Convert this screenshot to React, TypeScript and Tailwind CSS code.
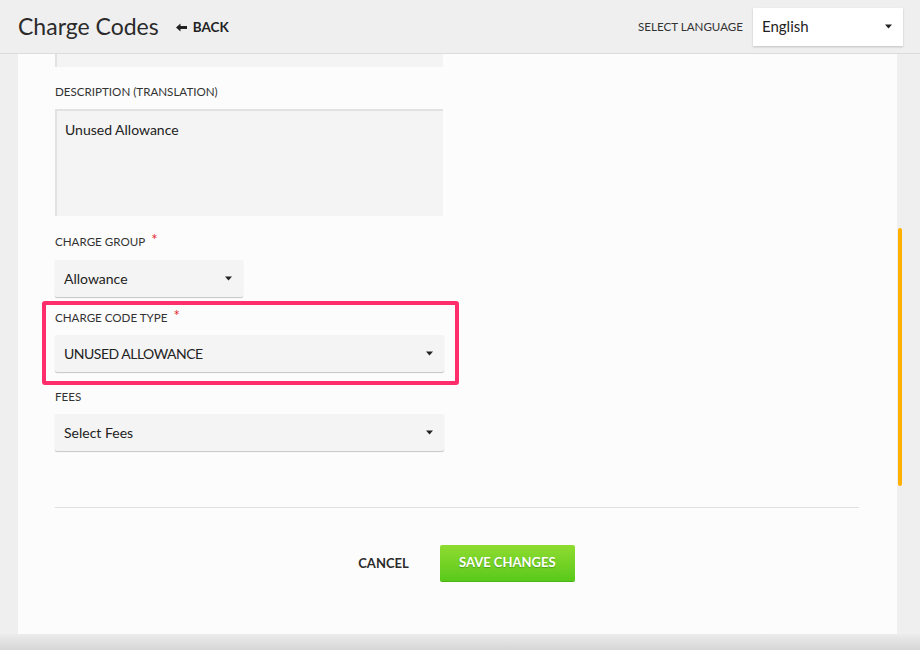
import React from 'react';

const font = { fontFamily: 'Lato, "Liberation Sans", sans-serif' };

function Caret() {
  return (
    <svg width="7" height="5" viewBox="0 0 7 5" className="shrink-0">
      <path d="M0 0.5h7L3.5 4.5z" fill="#222" />
    </svg>
  );
}

function Label({ text, required }: { text: string; required?: boolean }) {
  return (
    <div className="flex h-4 items-center text-[11.6px] uppercase leading-4 text-[#333]">
      <span>{text}</span>
      {required && <span className="ml-[6px] -mt-[7px] text-[15px] text-[#e8252f]">*</span>}
    </div>
  );
}

function Select({ value, width, caps }: { value: string; width: string; caps?: boolean }) {
  return (
    <div
      className={`flex h-[37px] items-center justify-between rounded-[2px] bg-[#f4f4f4] pl-[9px] pr-[11px] text-[14px] text-[#222] shadow-[0_1px_1px_rgba(0,0,0,0.22)] ${width}`}
    >
      <span className={caps ? 'tracking-[-0.5px]' : ''}>{value}</span>
      <Caret />
    </div>
  );
}

export default function App() {
  return (
    <div className="h-[650px] w-[920px] overflow-hidden bg-[#efefef]" style={font}>
      {/* Header */}
      <header className="flex h-[54px] items-center border-b border-[#dcdcdc] pl-[18px] pr-[17px]">
        <h1 className="text-[23px] font-normal leading-none text-[#2b2b2b]">Charge Codes</h1>
        <button className="ml-[17px] mt-[2px] flex items-center gap-[6px] text-[13.5px] font-bold uppercase text-[#222]">
          <svg width="11" height="9" viewBox="0 0 11 9">
            <path d="M0 4.5L4.5 0.5v2.6H11v2.8H4.5v2.6z" fill="#222" />
          </svg>
          Back
        </button>
        <div className="ml-auto flex items-center gap-[10px]">
          <span className="text-[11.6px] uppercase text-[#333]">Select Language</span>
          <div className="flex h-[38px] w-[150px] items-center justify-between bg-white pl-[9px] pr-[11px] text-[15px] text-[#222] shadow-[0_1px_2px_rgba(0,0,0,0.2)]">
            <span>English</span>
            <Caret />
          </div>
        </div>
      </header>

      <div className="flex">
        {/* Card */}
        <main className="ml-[18px] h-[580px] w-[879px] overflow-hidden bg-[#fcfcfc] pl-[37px] pr-[38px]">
          <div className="h-[13px] w-[388px] border-l-2 border-[#e2e2e2] bg-[#f4f4f4]" />

          <div className="mt-[17px]">
            <Label text="Description (Translation)" />
          </div>
          <div className="mt-[9px] h-[107px] w-[388px] border-l-2 border-t-2 border-[#e2e2e2] bg-[#f4f4f4] px-[8px] pt-[8px] text-[14px] text-[#222]">
            Unused Allowance
          </div>

          <div className="mt-[18px]">
            <Label text="Charge Group" required />
          </div>
          <div className="mt-[10px]">
            <Select value="Allowance" width="w-[188px]" />
          </div>

          <div className="-ml-[13px] mt-[4px] w-[417px] rounded-[3px] border-4 border-[#ff2d6b] pb-[9px] pl-[9px] pt-[5px]">
            <Label text="Charge Code Type" required />
            <div className="mt-[9px]">
              <Select value="UNUSED ALLOWANCE" width="w-[389px]" caps />
            </div>
          </div>

          <div className="mt-[4px]">
            <Label text="Fees" />
          </div>
          <div className="mt-[9px]">
            <Select value="Select Fees" width="w-[389px]" />
          </div>

          <div className="mt-[56px] border-t border-[#e0e0e0]" />

          <div className="mt-[37px] flex justify-center gap-[12px]">
            <button className="h-[37px] px-[19px] text-[13px] font-bold uppercase text-[#2b2b2b]">
              Cancel
            </button>
            <button className="h-[37px] w-[135px] rounded-[2px] border-b border-[#4bb516] bg-gradient-to-b from-[#8fdb30] to-[#58c91a] text-[13px] font-bold uppercase text-white [text-shadow:0_1px_1px_rgba(0,0,0,0.25)]">
              Save Changes
            </button>
          </div>
        </main>

        {/* Scrollbar */}
        <div className="ml-px w-[4px]">
          <div className="mt-[174px] h-[258px] w-[4px] rounded-full bg-[#ffb000]" />
        </div>
      </div>

      <div className="h-[16px] bg-gradient-to-b from-[#ececec] to-[#d6d6d6]" />
    </div>
  );
}
